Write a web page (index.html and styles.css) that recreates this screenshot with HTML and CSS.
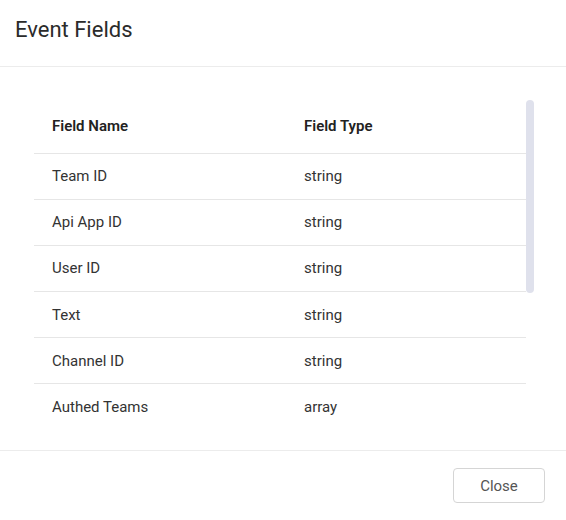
FILE: index.html
```html
<!DOCTYPE html>
<html>
<head>
<meta charset="utf-8">
<link rel="stylesheet" href="styles.css">
</head>
<body>
<div class="dialog">
  <div class="dialog-header">
    <h1 class="dialog-title">Event Fields</h1>
  </div>
  <div class="dialog-body">
    <div class="scroll-wrap">
      <div class="scroll">
        <table class="fields">
          <thead>
            <tr><th class="col-name">Field Name</th><th>Field Type</th></tr>
          </thead>
          <tbody>
            <tr><td>Team ID</td><td>string</td></tr>
            <tr><td>Api App ID</td><td>string</td></tr>
            <tr><td>User ID</td><td>string</td></tr>
            <tr><td>Text</td><td>string</td></tr>
            <tr><td>Channel ID</td><td>string</td></tr>
            <tr class="last"><td>Authed Teams</td><td>array</td></tr>
          </tbody>
        </table>
      </div>
      <div class="scrollbar"><div class="thumb"></div></div>
    </div>
  </div>
  <div class="dialog-footer">
    <button class="btn">Close</button>
  </div>
</div>
</body>
</html>
```
FILE: styles.css
```css
html, body {
  margin: 0;
  padding: 0;
  background: #fff;
}
body {
  font-family: Roboto, "Liberation Sans", Arial, sans-serif;
  color: #333;
}
.dialog {
  width: 566px;
  height: 520px;
  display: flex;
  flex-direction: column;
  background: #fff;
}
.dialog-header {
  height: 67px;
  border-bottom: 1px solid #ececec;
  padding: 0 15px;
  display: flex;
  align-items: center;
  box-sizing: border-box;
}
.dialog-title {
  margin: 0;
  font-size: 22px;
  font-weight: 400;
  color: #2b2b2b;
  line-height: 1;
  padding-bottom: 6px;
}
.dialog-body {
  padding: 33px 32px 20px 34px;
  height: 384px;
  box-sizing: border-box;
  border-bottom: 1px solid #ececec;
}
.scroll-wrap {
  display: flex;
  height: 330px;
}
.scroll {
  flex: 1;
  overflow: hidden;
}
.scrollbar {
  width: 8px;
  flex: none;
}
.thumb {
  height: 193px;
  background: #dfe1ec;
  border-radius: 4px;
}
.fields {
  width: 100%;
  border-collapse: collapse;
  font-size: 15px;
}
.fields th {
  text-align: left;
  font-weight: 600;
  color: #222;
  height: 53px;
  padding: 0 18px;
  box-sizing: border-box;
  border-bottom: 1px solid #e6e6e6;
}
.fields th.col-name {
  width: 252px;
}
.fields td {
  height: 46.2px;
  padding: 0 18px;
  box-sizing: border-box;
  border-bottom: 1px solid #e6e6e6;
  color: #333;
}
.fields tr.last td {
  border-bottom: none;
}
.dialog-footer {
  flex: 1;
  display: flex;
  justify-content: flex-end;
  align-items: flex-start;
  padding: 17px 21px 0 0;
}
.btn {
  width: 92px;
  height: 35px;
  background: #fff;
  border: 1px solid #d5d5d5;
  border-radius: 4px;
  font-family: Roboto, "Liberation Sans", Arial, sans-serif;
  font-size: 15px;
  color: #555;
  cursor: pointer;
}
```
